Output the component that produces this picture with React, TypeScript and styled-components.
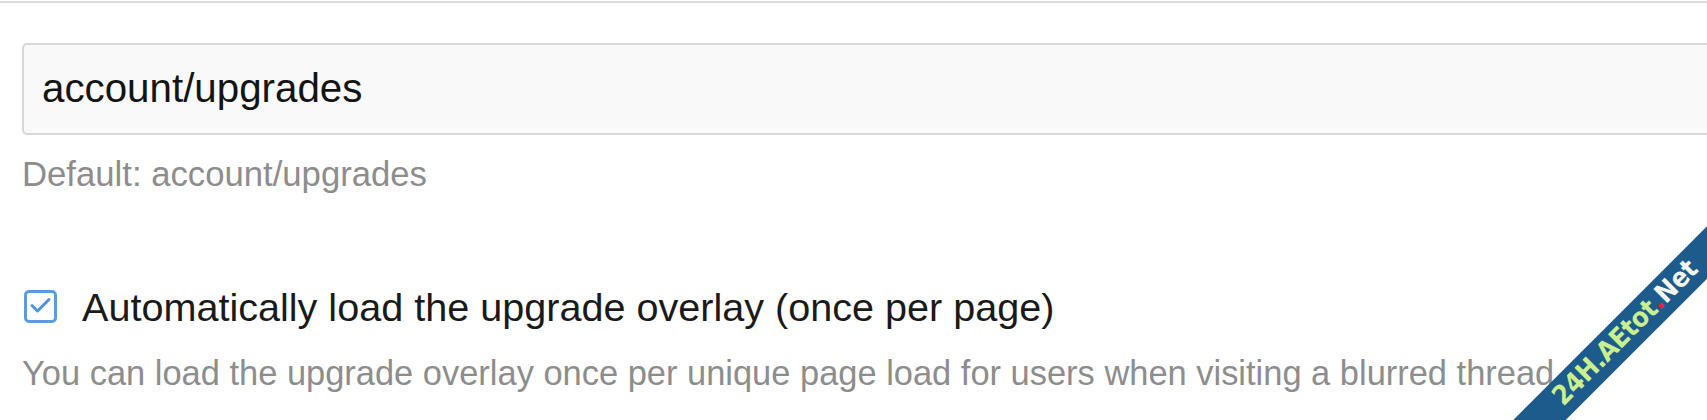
import React from "react";
import styled, { createGlobalStyle } from "styled-components";

const GlobalStyle = createGlobalStyle`
  html, body {
    margin: 0;
    padding: 0;
    background: #ffffff;
    overflow: hidden;
  }
  body {
    font-family: "Liberation Sans", Arial, Helvetica, sans-serif;
  }
`;

const Page = styled.div`
  position: relative;
  width: 100%;
  height: 420px;
  overflow: hidden;
  background: #ffffff;
`;

const TopRule = styled.div`
  margin-top: 1px;
  height: 2px;
  background: #dcdcdc;
`;

const Form = styled.div`
  display: flex;
  flex-direction: column;
  padding: 40px 0 0 22px;
`;

const TextInput = styled.input`
  box-sizing: border-box;
  display: block;
  width: calc(100% + 40px);
  height: 92px;
  margin: 0;
  padding: 0 18px;
  border: 2px solid #d8d8d8;
  border-radius: 5px;
  background: #f9f9f9;
  color: #141414;
  font-family: "Liberation Sans", Arial, Helvetica, sans-serif;
  font-size: 40.3px;
  outline: none;
`;

const Hint = styled.div<{ $gap: number; $size: number }>`
  margin-top: ${(p) => p.$gap}px;
  font-size: ${(p) => p.$size}px;
  line-height: 48.6px;
  color: #8d8d8d;
  white-space: nowrap;
`;

const CheckRow = styled.label`
  display: flex;
  align-items: center;
  gap: 25px;
  margin-top: 82px;
  height: 52px;
`;

const Box = styled.span`
  box-sizing: border-box;
  display: flex;
  align-items: center;
  justify-content: center;
  width: 33px;
  height: 33px;
  margin-left: 2px;
  border: 3px solid #5b9be3;
  border-radius: 5px;
  background: #ffffff;
`;

const LabelText = styled.span`
  font-size: 39.6px;
  line-height: 52px;
  color: #1a1a1a;
  white-space: nowrap;
`;

const Band = styled.div`
  position: absolute;
  left: 1376px;
  top: 315px;
  width: 500px;
  height: 37px;
  background: #1d5b8c;
  transform: rotate(-45deg);
  display: flex;
  align-items: center;
  justify-content: center;
`;

const Mark = styled.span`
  font-family: "DejaVu Sans Condensed", "DejaVu Sans", "Liberation Sans", sans-serif;
  font-stretch: condensed;
  font-weight: 700;
  font-size: 27px;
  letter-spacing: -0.3px;
  line-height: 1;
  color: #c9ef8f;
  white-space: nowrap;
  transform: translateY(-2px);
`;

const MarkPart = styled.span<{ $tone: "red" | "white" }>`
  color: ${(p) => (p.$tone === "red" ? "#e4213f" : "#f6f8f0")};
`;

const Check = () => (
  <svg width="27" height="27" viewBox="0 0 27 27" fill="none">
    <path
      d="M5 12.5 L10.5 18 L22 6.5"
      stroke="#4f93df"
      strokeWidth="3"
      strokeLinecap="round"
      strokeLinejoin="round"
    />
  </svg>
);

export default function App() {
  return (
    <>
      <GlobalStyle />
      <Page>
        <TopRule />
        <Form>
          <TextInput defaultValue="account/upgrades" readOnly />
          <Hint $gap={15} $size={34.7}>
            Default: account/upgrades
          </Hint>
          <CheckRow>
            <Box>
              <Check />
            </Box>
            <LabelText>Automatically load the upgrade overlay (once per page)</LabelText>
          </CheckRow>
          <Hint $gap={16} $size={34.45}>
            You can load the upgrade overlay once per unique page load for users when visiting a blurred thread
          </Hint>
        </Form>
        <Band>
          <Mark>
            24H.AEtot<MarkPart $tone="red">.</MarkPart>
            <MarkPart $tone="white">Net</MarkPart>
          </Mark>
        </Band>
      </Page>
    </>
  );
}
